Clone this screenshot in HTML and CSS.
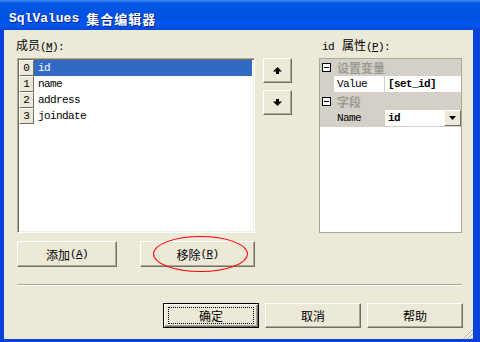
FILE: index.html
```html
<!doctype html>
<html lang="zh">
<head>
  <meta charset="utf-8">
  <title>SqlValues 集合编辑器</title>
  <link rel="stylesheet" href="styles.css">
</head>
<body>

<div class="window">
  <div class="titlebar">
    <span class="title-latin">SqlValues</span>
    <span class="title-cjk">集合编辑器</span>
  </div>

  <div class="dialog">
    <div class="top">

      <div class="col-members">
        <div class="label label-members">成员<span class="mn">(<u>M</u>):</span></div>
        <div class="listbox">
          <div class="list-row selected"><span class="idx">0</span><span class="item">id</span></div>
          <div class="list-row"><span class="idx">1</span><span class="item">name</span></div>
          <div class="list-row"><span class="idx">2</span><span class="item">address</span></div>
          <div class="list-row"><span class="idx">3</span><span class="item">joindate</span></div>
        </div>
        <div class="list-buttons">
          <button class="btn btn-add">添加<span class="mn">(<u>A</u>)</span></button>
          <button class="btn btn-remove">移除<span class="mn">(<u>R</u>)</span><span class="ring"></span></button>
        </div>
      </div>

      <div class="col-move">
        <button class="btn btn-move">
          <svg width="9" height="7" viewBox="0 0 9 7"><polygon points="4.5,0 9,4.5 6,4.5 6,7 3,7 3,4.5 0,4.5" fill="#000"/></svg>
        </button>
        <button class="btn btn-move">
          <svg width="9" height="7" viewBox="0 0 9 7"><polygon points="3,0 6,0 6,2.5 9,2.5 4.5,7 0,2.5 3,2.5" fill="#000"/></svg>
        </button>
      </div>

      <div class="col-props">
        <div class="label label-props"><span class="mn prop-id">id</span>属性<span class="mn">(<u>P</u>):</span></div>
        <div class="propgrid">
          <div class="pg-cat"><span class="pg-toggle"></span>设置变量</div>
          <div class="pg-row">
            <span class="pg-name">Value</span>
            <span class="pg-value"><span class="pg-text">[set_id]</span></span>
          </div>
          <div class="pg-cat"><span class="pg-toggle"></span>字段</div>
          <div class="pg-row pg-selected">
            <span class="pg-name">Name</span>
            <span class="pg-value">
              <span class="pg-text">id</span>
              <span class="pg-drop"><svg width="7" height="4" viewBox="0 0 7 4"><polygon points="0,0 7,0 3.5,4" fill="#000"/></svg></span>
            </span>
          </div>
        </div>
      </div>

    </div>

    <div class="separator"></div>

    <div class="dialog-buttons">
      <button class="btn btn-dlg btn-default">确定</button>
      <button class="btn btn-dlg">取消</button>
      <button class="btn btn-dlg">帮助</button>
    </div>

    <svg class="grip" width="12" height="12" viewBox="0 0 12 12">
      <line x1="12" y1="1" x2="1" y2="12" stroke="#fff"/>
      <line x1="12" y1="2" x2="2" y2="12" stroke="#ACA899"/>
      <line x1="12" y1="5" x2="5" y2="12" stroke="#fff"/>
      <line x1="12" y1="6" x2="6" y2="12" stroke="#ACA899"/>
      <line x1="12" y1="9" x2="9" y2="12" stroke="#fff"/>
      <line x1="12" y1="10" x2="10" y2="12" stroke="#ACA899"/>
    </svg>
  </div>
</div>

</body>
</html>
```

FILE: styles.css
```css
body {
  margin: 0;
  background: #fff;
  font-family: "Noto Sans CJK SC", "Liberation Sans", sans-serif;
  font-size: 12px;
  color: #000;
}

.window {
  width: 480px;
  height: 342px;
  background: #0842D8;
  display: flex;
  flex-direction: column;
}

.titlebar {
  height: 30px;
  flex: none;
  box-sizing: border-box;
  padding: 6px 0 0 9px;
  display: flex;
  align-items: center;
  gap: 7px;
  color: #fff;
  font-weight: bold;
  text-shadow: 1px 1px #0A1E8C;
  background: linear-gradient(#3A8CF5 0, #0A5AE8 3px, #0055E5 6px, #0050E0 18px, #0058EE 26px, #0A46D0 30px);
}

.title-latin {
  font-family: "Liberation Mono", monospace;
  font-size: 13px;
}

.title-cjk {
  font-size: 13px;
  letter-spacing: 1px;
}

.dialog {
  flex: 1;
  margin: 0 7px 3px 4px;
  background: #ECE9D8;
  position: relative;
  padding: 7px 11px 0 13px;
}

.top {
  display: flex;
}

.label {
  height: 16px;
  line-height: 16px;
  margin-bottom: 5px;
  white-space: nowrap;
}

.label-members {
  margin-left: -1px;
}

.label-props {
  padding-left: 3px;
}

.prop-id {
  margin-right: 8px;
}

.mn {
  font-family: "Liberation Mono", monospace;
  font-size: 11px;
  letter-spacing: -0.6px;
}

/* members list */
.col-members {
  width: 238px;
}

.listbox {
  height: 175px;
  box-sizing: border-box;
  background: #fff;
  border: 1px solid;
  border-color: #ACA899 #fff #fff #ACA899;
  box-shadow: inset 1px 1px #716F64, inset -1px -1px #F1EFE2;
  padding: 1px 2px 0 1px;
}

.list-row {
  display: flex;
  height: 16px;
}

.idx {
  width: 15px;
  height: 16px;
  box-sizing: border-box;
  background: #ECE9D8;
  border: 1px solid;
  border-color: #fff #716F64 #716F64 #fff;
  font-family: "Liberation Mono", monospace;
  font-size: 11px;
  line-height: 14px;
  text-align: center;
}

.item {
  flex: 1;
  padding-left: 4px;
  line-height: 16px;
  font-family: "Liberation Mono", monospace;
  font-size: 11px;
  letter-spacing: -0.6px;
}

.selected .item {
  background: #316AC5;
  color: #fff;
}

.list-buttons {
  display: flex;
  justify-content: space-between;
  margin-top: 8px;
}

/* buttons */
.btn {
  margin: 0;
  padding: 0;
  box-sizing: border-box;
  background: #ECE9D8;
  border: 1px solid;
  border-color: #fff #716F64 #716F64 #fff;
  box-shadow: inset -1px -1px #ACA899;
  font-family: "Noto Sans CJK SC", sans-serif;
  font-size: 12px;
  color: #000;
  display: flex;
  align-items: center;
  justify-content: center;
}

.btn-add {
  width: 100px;
  height: 26px;
}

.btn-remove {
  width: 115px;
  height: 26px;
  position: relative;
}

.ring {
  position: absolute;
  left: 12px;
  top: -6px;
  width: 95px;
  height: 36px;
  box-sizing: border-box;
  border: 1px solid #f00;
  border-radius: 50%;
}

.col-move {
  width: 29px;
  margin-left: 8px;
  padding-top: 21px;
  display: flex;
  flex-direction: column;
  gap: 7px;
}

.btn-move {
  width: 29px;
  height: 25px;
}

/* property grid */
.col-props {
  width: 143px;
  margin-left: 27px;
}

.propgrid {
  height: 175px;
  box-sizing: border-box;
  background: #fff;
  border: 1px solid #ACA899;
}

.pg-cat {
  height: 17px;
  display: flex;
  align-items: center;
  background: #D4D0C8;
  color: #9D9B93;
  font-weight: bold;
}

.pg-toggle {
  width: 9px;
  height: 9px;
  box-sizing: border-box;
  border: 1px solid #000;
  background: #fff;
  margin: 0 6px 0 2px;
  position: relative;
}

.pg-toggle::after {
  content: "";
  position: absolute;
  left: 1px;
  right: 1px;
  top: 3px;
  height: 1px;
  background: #000;
}

.pg-row {
  height: 17px;
  box-sizing: border-box;
  display: flex;
  padding-left: 14px;
  background: #D4D0C8;
  border-bottom: 1px solid #D4D0C8;
  font-family: "Liberation Mono", monospace;
  font-size: 11px;
  letter-spacing: -0.6px;
  line-height: 16px;
}

.pg-name {
  width: 51px;
  box-sizing: border-box;
  padding-left: 3px;
  background: #fff;
  border-right: 1px solid #D4D0C8;
}

.pg-selected .pg-name {
  background: #D4D0C8;
}

.pg-value {
  flex: 1;
  display: flex;
  background: #fff;
  font-weight: bold;
}

.pg-text {
  flex: 1;
  padding-left: 3px;
}

.pg-drop {
  width: 17px;
  height: 16px;
  box-sizing: border-box;
  background: #ECE9D8;
  border: 1px solid;
  border-color: #fff #716F64 #716F64 #fff;
  display: flex;
  align-items: center;
  justify-content: center;
}

/* bottom */
.separator {
  margin-top: 17px;
  height: 1px;
  background: #ACA899;
  border-bottom: 1px solid #fff;
}

.dialog-buttons {
  display: flex;
  justify-content: flex-end;
  gap: 6px;
  margin-top: 17px;
  margin-right: -1px;
}

.btn-dlg {
  width: 96px;
  height: 25px;
}

.btn-default {
  position: relative;
  border: 1px solid #000;
  box-shadow: inset 1px 1px #fff, inset -1px -1px #716F64, inset -2px -2px #ACA899;
}

.btn-default::after {
  content: "";
  position: absolute;
  inset: 3px 4px;
  border: 1px dotted #000;
}

.grip {
  position: absolute;
  right: 0;
  bottom: 0;
}
```
